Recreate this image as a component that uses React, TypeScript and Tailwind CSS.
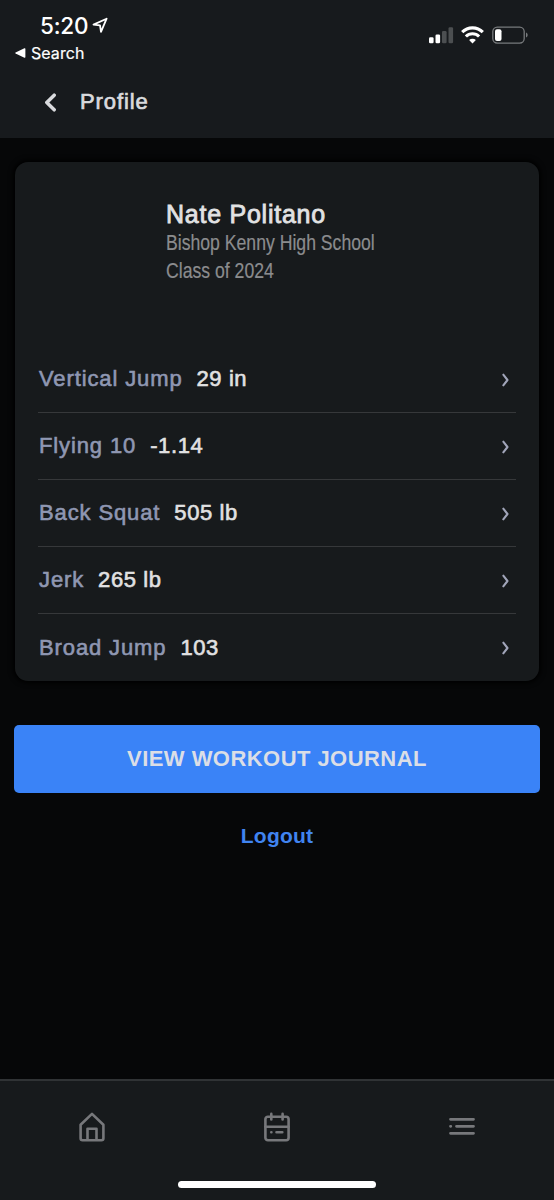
import React from 'react';

interface Stat {
  label: string;
  value: string;
}

const stats: Stat[] = [
  { label: 'Vertical Jump', value: '29 in' },
  { label: 'Flying 10', value: '-1.14' },
  { label: 'Back Squat', value: '505 lb' },
  { label: 'Jerk', value: '265 lb' },
  { label: 'Broad Jump', value: '103' },
];

function StatusBar() {
  return (
    <div className="flex h-[66px] justify-between font-['Inter',sans-serif] text-white">
      <div className="pt-[12px]">
        <div className="flex items-center pl-[40px]">
          <span className="text-[22.5px] leading-[28px] font-medium tracking-[-0.2px]">5:20</span>
          <svg className="mb-[2px] ml-[4px]" width="17" height="17" viewBox="0 0 17 17" fill="none" stroke="currentColor" strokeWidth="1.8" strokeLinejoin="round">
            <path d="M14.600 1.700 1.500 7.600 8 8.400 9 14.900Z" />
          </svg>
        </div>
        <div className="flex items-center pl-[15px]">
          <svg width="11" height="10" viewBox="0 0 11 10" fill="currentColor">
            <path d="M.6 4.400 9.400.3q1-.4 1 .7v8q0 1.100-1 .7L.6 5.600Q-.2 5 .6 4.400Z" />
          </svg>
          <span className="ml-[5px] text-[16px] leading-[26px] tracking-[0.05px] [-webkit-text-stroke:0.2px_currentColor]">Search</span>
        </div>
      </div>
      <div className="flex items-start gap-[7px] pt-[26px] pr-[26px]">
        <svg width="26" height="18" viewBox="0 0 26 18" fill="currentColor">
          <rect x="1" y="11.300" width="4.600" height="6" rx="1.300" />
          <rect x="7.500" y="8.500" width="4.600" height="8.800" rx="1.300" />
          <rect x="14" y="5" width="4.600" height="12.300" rx="1.300" opacity="0.230" />
          <rect x="20.500" y="1.200" width="4.600" height="16.100" rx="1.300" opacity="0.230" />
        </svg>
        <svg className="-ml-[1px]" width="25" height="18" viewBox="0 0 25 18" fill="none" stroke="currentColor" strokeWidth="3.100">
          <path d="M2.200 6.200a14.400 14.400 0 0 1 20.600 0" />
          <path d="M5.900 10.500a9.200 9.200 0 0 1 13.200 0" />
          <path d="M12.500 17.500 9.100 14a4.900 4.900 0 0 1 6.800 0Z" fill="currentColor" stroke="none" />
        </svg>
        <svg width="36" height="18" viewBox="0 0 36 18" fill="none">
          <rect x="0.800" y="1.100" width="31.400" height="16" rx="4.500" stroke="#777a7c" strokeWidth="1.300" />
          <path d="M34 6.600c2.200.9 2.200 4.100 0 5Z" fill="#777a7c" />
          <rect x="3" y="3.300" width="6.500" height="11.700" rx="2" fill="currentColor" />
        </svg>
      </div>
    </div>
  );
}

function Header() {
  return (
    <div className="flex h-[72px] items-center pl-[44px] text-[#d9dadd]">
      <svg width="13" height="19" viewBox="0 0 13 19" fill="none" stroke="currentColor" strokeWidth="3.500" strokeLinecap="round" strokeLinejoin="round">
        <path d="M10.200 2.200 2.800 9.500l7.400 7.300" />
      </svg>
      <h1 className="ml-[23px] text-[22px] leading-[28px] tracking-[0.9px] [-webkit-text-stroke:0.7px_currentColor]">Profile</h1>
    </div>
  );
}

function StatRow({ stat }: { stat: Stat }) {
  return (
    <div className="flex h-[67px] items-center border-b border-[#36383a] pl-px text-[22px] leading-[28px] last:border-b-0">
      <span className="tracking-[0.88px] text-[#8f97b2] [-webkit-text-stroke:0.6px_currentColor]">{stat.label}</span>
      <span className="ml-[14px] tracking-[0.6px] text-[#e1e1e2] [-webkit-text-stroke:0.6px_currentColor]">{stat.value}</span>
      <svg className="mt-px mr-[6px] ml-auto" width="9" height="14" viewBox="0 0 9 14" fill="none" stroke="#a1a5b9" strokeWidth="2.100" strokeLinecap="round" strokeLinejoin="round">
        <path d="M2.300 1.700 6.500 7 2.300 12.300" />
      </svg>
    </div>
  );
}

function TabBar() {
  return (
    <div className="h-[121px] border-t-2 border-[#303335] bg-[#171a1c]">
      <div className="grid h-[91px] grid-cols-3 place-items-center text-[#77787b]">
        <button type="button">
          <svg width="28" height="30" viewBox="0 0 28 30" fill="none" stroke="currentColor" strokeWidth="2.600" strokeLinejoin="round">
            <path d="M2.600 12.800 14 1.900 25.400 12.800v13.400q0 2-2 2H4.600q-2 0-2-2Z" />
            <path d="M9.500 28V16.800h9V28" />
          </svg>
        </button>
        <button type="button">
          <svg width="28" height="30" viewBox="0 0 28 30" fill="none" stroke="currentColor" strokeWidth="2.600" strokeLinecap="round" strokeLinejoin="round">
            <rect x="2.400" y="4.700" width="23.200" height="23.500" rx="2.500" />
            <path d="M2.400 14.700h23.200M8.300 1.900v5.500M19.600 1.900v5.500M8.300 20.300h.1M13.500 20.300h5.800" />
          </svg>
        </button>
        <button type="button">
          <svg width="28" height="30" viewBox="0 0 28 30" fill="none" stroke="currentColor" strokeWidth="2.800" strokeLinecap="round">
            <path d="M2.500 7.300h23M2.500 14.300h.3M8.500 14.300h17M2.500 21.300h23" />
          </svg>
        </button>
      </div>
      <div className="mx-auto mt-[9px] h-[7px] w-[198px] rounded-full bg-white" />
    </div>
  );
}

export default function App() {
  return (
    <div className="flex h-[1200px] w-[554px] flex-col bg-[#060708] font-['Liberation_Sans',Arial,sans-serif]">
      <header className="h-[138px] bg-[#171a1d]">
        <StatusBar />
        <Header />
      </header>

      <main className="flex-1 px-[14px] pt-[24px]">
        <section className="mx-px h-[519px] rounded-[13px] bg-[#171a1c] px-[23px] shadow-[0_0_5px_2px_#000]">
          <div className="h-[184px] pt-[37px] pl-[128px]">
            <h2 className="text-[25px] leading-[30px] tracking-[0.75px] text-[#e1e2e3] [-webkit-text-stroke:0.8px_currentColor]">Nate Politano</h2>
            {/* condensed face for the school lines */}
            <div className="w-max origin-left scale-x-[0.82] text-[21.5px] leading-[28px] text-[#8b8c8e] [-webkit-text-stroke:0.2px_currentColor]">
              <p>Bishop Kenny High School</p>
              <p>Class of 2024</p>
            </div>
          </div>
          {stats.map((stat) => (
            <StatRow key={stat.label} stat={stat} />
          ))}
        </section>

        <button type="button" className="mt-[44px] h-[68px] w-full rounded-[5px] bg-[#3a83f7] pb-[2px] text-[22px] font-bold tracking-[0.45px] text-[#dbdee6]">
          VIEW WORKOUT JOURNAL
        </button>
        <button type="button" className="mt-[28px] block w-full text-center text-[21px] leading-[30px] font-bold tracking-[0.2px] text-[#4084f0]">
          Logout
        </button>
      </main>

      <TabBar />
    </div>
  );
}
